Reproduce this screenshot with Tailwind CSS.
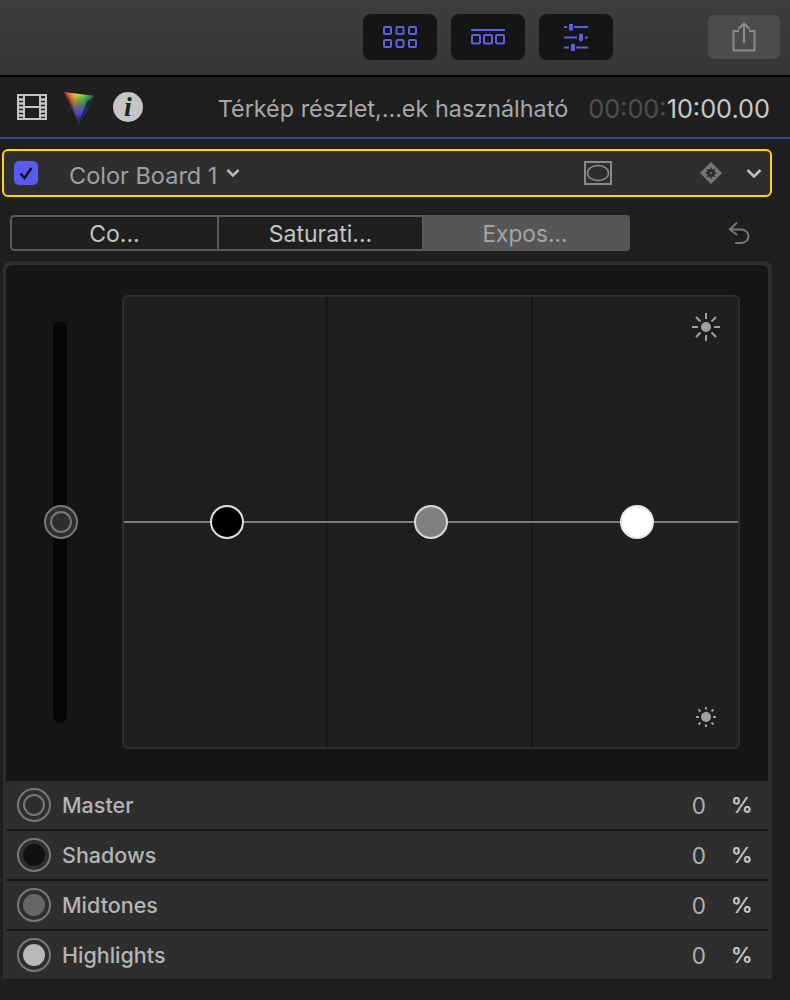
<!DOCTYPE html>
<html><head><meta charset="utf-8"><script src="https://cdn.jsdelivr.net/npm/@tailwindcss/browser@4"></script></head>
<body class="m-0 bg-[#1f1f1f]">
<div class="w-[790px] h-[1000px] overflow-hidden bg-[#1f1f1f] flex flex-col font-['Inter',sans-serif]">
  <!-- top toolbar -->
  <div class="h-[75px] shrink-0 bg-gradient-to-b from-[#3d3d3d] to-[#363636] flex items-start pt-[14px] pl-[363px]">
    <div class="w-[74px] h-[46px] rounded-[8px] bg-[#151515] flex items-center justify-center">
      <svg width="34" height="22" viewBox="0 0 34 22" fill="none" stroke="#5f5fe6" stroke-width="2"><rect x="1" y="1" width="7" height="7" rx="1"/><rect x="13.500" y="1" width="7" height="7" rx="1"/><rect x="26" y="1" width="7" height="7" rx="1"/><rect x="1" y="14" width="7" height="7" rx="1"/><rect x="13.500" y="14" width="7" height="7" rx="1"/><rect x="26" y="14" width="7" height="7" rx="1"/></svg>
    </div>
    <div class="w-[74px] h-[46px] rounded-[8px] bg-[#151515] flex items-center justify-center ml-[14px]">
      <svg width="34" height="16" viewBox="0 0 34 16" fill="none" stroke="#5f5fe6" stroke-width="2"><path d="M0 1H34"/><rect x="1" y="6" width="8" height="8.500" rx="1"/><rect x="13" y="6" width="8" height="8.500" rx="1"/><rect x="25" y="6" width="8" height="8.500" rx="1"/></svg>
    </div>
    <div class="w-[74px] h-[46px] rounded-[8px] bg-[#151515] flex items-center justify-center ml-[14px]">
      <svg width="24" height="27" viewBox="0 0 24 27" fill="#5f5fe6" stroke="none"><path d="M0 2h3v2H0zM10 2h14v2H10zM0 12.500h13v2H0zM21 12.500h3v2h-3zM0 22.500h5v2H0zM12 22.500h12v2H12z"/><rect x="5" y="-1" width="4" height="8" rx="2"/><rect x="15" y="9.500" width="4" height="8" rx="2"/><rect x="7" y="19.500" width="4" height="8" rx="2"/></svg>
    </div>
    <div class="w-[72px] h-[44px] rounded-[6px] bg-[#4c4c4c] flex items-center justify-center ml-[95px] mt-px">
      <svg width="24" height="30" viewBox="0 0 24 30" fill="none" stroke="#8c8c8c" stroke-width="2"><path d="M7 9H1.500V28.500H22.500V9H17"/><path d="M12 21V2M6.500 7L12 1.500L17.500 7"/></svg>
    </div>
  </div>
  <div class="h-[2px] shrink-0 bg-black"></div>
  <!-- info bar -->
  <div class="h-[60px] shrink-0 flex items-center pl-[17px] pr-[20px]">
    <svg width="30" height="28" viewBox="0 0 30 28" fill="none" stroke="#c4c4c4" stroke-width="2"><rect x="1" y="2" width="28" height="24"/><path d="M7 2V26M23 2V26M7 14H23"/><path d="M1 6.500H7M1 10.500H7M1 14.500H7M1 18.500H7M1 22.500H7M23 6.500H29M23 10.500H29M23 14.500H29M23 18.500H29M23 22.500H29" stroke-width="2.500"/></svg>
    <svg width="34" height="32" viewBox="0 0 34 32" class="ml-[16px]">
      <defs><linearGradient id="g" x1="0" y1="0" x2="1" y2="0"><stop offset="0" stop-color="#e02040"/><stop offset="0.35" stop-color="#f0c030"/><stop offset="0.6" stop-color="#60e050"/><stop offset="0.85" stop-color="#308060"/><stop offset="1" stop-color="#301a30"/></linearGradient><linearGradient id="h" x1="0" y1="0" x2="0" y2="1"><stop offset="0.1" stop-color="#000" stop-opacity="0"/><stop offset="0.65" stop-color="#4a3ae0" stop-opacity="0.9"/><stop offset="1" stop-color="#1a1a40"/></linearGradient></defs>
      <path d="M1 1L33 5L16 32Z" fill="url(#g)"/><path d="M1 1L33 5L16 32Z" fill="url(#h)"/><path d="M33 5L16 32L24 10Z" fill="#000" fill-opacity="0.5"/><path d="M1 1L16 32L6 6Z" fill="#000" fill-opacity="0.35"/>
    </svg>
    <div class="ml-[16px] w-[30px] h-[30px] rounded-full bg-[#c6c6c6] flex items-center justify-center font-['Liberation_Serif',serif] italic font-bold text-[28px] leading-none text-[#1f1f1f]">i</div>
    <div class="ml-auto pt-[3px] text-[23.400px] leading-none text-[#a8a8a8] whitespace-nowrap">Térkép részlet,...ek használható</div>
    <div class="ml-[20px] pt-[3px] text-[25.300px] leading-none whitespace-nowrap text-[#c8c8c8]"><span class="text-[#4f4f4f]">00:00:</span>10:00.00</div>
  </div>
  <div class="h-[2px] shrink-0 bg-[#40409c]"></div>
  <!-- color board header -->
  <div class="mt-[10px] ml-[2px] w-[770px] h-[48px] shrink-0 border-2 border-[#ffd60a] rounded-[6px] bg-[#2e2e2e] flex items-center pl-[10px] pr-[8px]">
    <div class="w-6 h-6 rounded-[5px] bg-[#5a5af0] flex items-center justify-center">
      <svg width="16" height="16" viewBox="0 0 16 16" fill="none" stroke="#111" stroke-width="2.500"><path d="M2.500 8.500L6.500 13L13.500 3"/></svg>
    </div>
    <span class="ml-[31px] pt-[5px] text-[23.500px] leading-none text-[#a0a0a0] whitespace-nowrap">Color Board 1</span>
    <svg width="14" height="10" viewBox="0 0 14 10" fill="none" stroke="#b8b8b8" stroke-width="2.500" class="ml-[9px]"><path d="M1.500 2L7 7.500L12.500 2"/></svg>
    <svg width="28" height="24" viewBox="0 0 28 24" fill="none" stroke="#8a8a8a" class="ml-auto"><rect x="1" y="1" width="26" height="22" stroke-width="2"/><ellipse cx="14" cy="12" rx="10.500" ry="7.500" stroke-width="1.500"/></svg>
    <svg width="22" height="22" viewBox="0 0 22 22" class="ml-[88px]"><path d="M11 0L22 11L11 22L0 11Z" fill="#777"/><circle cx="11" cy="11" r="4" fill="#2e2e2e"/><path d="M11 5.500V16.500M5.500 11H16.500M7 7L15 15M15 7L7 15" stroke="#2e2e2e" stroke-width="1.500"/><circle cx="11" cy="11" r="1.200" fill="#666"/></svg>
    <svg width="16" height="11" viewBox="0 0 16 11" fill="none" stroke="#c0c0c0" stroke-width="2.500" class="ml-[24px]"><path d="M1.500 2L8 8.500L14.500 2"/></svg>
  </div>
  <!-- tabs -->
  <div class="mt-[18px] h-[36px] shrink-0 flex items-center pl-[10px]">
    <div class="w-[620px] h-[36px] flex rounded-[4px] overflow-hidden text-[23px] leading-none">
      <div class="w-[209px] border-2 border-[#5a5a5a] rounded-l-[4px] flex items-center justify-center text-[#c4c4c4] pt-[2px]">Co...</div>
      <div class="w-[205px] border-y-2 border-r-2 border-[#5a5a5a] flex items-center justify-center text-[#c4c4c4] pt-[2px]">Saturati...</div>
      <div class="flex-1 bg-[#565656] flex items-center justify-center text-[#a4a4a4] pt-[2px] pr-[4px] text-[22.700px]">Expos...</div>
    </div>
    <svg width="22" height="24" viewBox="0 0 22 24" fill="none" stroke="#787878" stroke-width="2" class="ml-[98px]"><path d="M9 1.500L2 8.500L9 14"/><path d="M2 8.500H13C23 8.500 23 22 13 22H7"/></svg>
  </div>
  <!-- panel -->
  <div class="mt-[10px] ml-[3px] w-[769px] h-[718px] shrink-0 rounded-t-[8px] bg-[#2e2e2e] pt-[4px] pl-[3px] pr-[4px] flex flex-col">
    <div class="h-[516px] shrink-0 bg-[#161616] rounded-t-[6px] flex pt-[30px]">
      <div class="w-[116px] shrink-0 pl-[47px]">
        <div class="w-[14px] h-[402px] mt-[26px] rounded-full bg-[#070707] relative flex items-center">
          <div class="absolute left-[-9px] w-[34px] h-[34px] rounded-full bg-[#2e2e2e] border-2 border-[#787878] flex items-center justify-center">
            <div class="w-[22px] h-[22px] rounded-full border-2 border-[#787878]"></div>
          </div>
        </div>
      </div>
      <div class="w-[618px] h-[454px] rounded-[6px] border-2 border-[#2e2e2e] bg-[#1f1f1f] grid grid-cols-[204px_205px_1fr] relative overflow-hidden">
        <div class="border-r-2 border-[#161616]"></div>
        <div class="border-r-2 border-[#161616]"></div>
        <div></div>
        <div class="absolute left-0 right-0 top-[224px] h-[2px] bg-[#7c7c7c]"></div>
        <div class="absolute left-[86px] top-[208px] w-[34px] h-[34px] rounded-full bg-black border-2 border-[#e0e0e0]"></div>
        <div class="absolute left-[290px] top-[208px] w-[34px] h-[34px] rounded-full bg-[#808080] border-2 border-[#d8d8d8]"></div>
        <div class="absolute left-[496px] top-[208px] w-[34px] h-[34px] rounded-full bg-white border-2 border-[#e8e8e8]"></div>
        <svg width="28" height="28" viewBox="0 0 28 28" stroke="#a0a0a0" stroke-width="2" class="absolute right-[18px] top-[16px]"><circle cx="14" cy="14" r="5" fill="#a0a0a0" stroke="none"/><path d="M14 0V6M14 22V28M0 14H6M22 14H28M4 4L8.500 8.500M19.500 19.500L24 24M24 4L19.500 8.500M8.500 19.500L4 24"/></svg>
        <svg width="20" height="20" viewBox="0 0 20 20" stroke="#a0a0a0" stroke-width="2" class="absolute right-[22px] bottom-[20px]"><circle cx="10" cy="10" r="5" fill="#a0a0a0" stroke="none"/><path d="M10 0V2.500M10 17.500V20M0 10H3M17 10H20M2.500 2.500L4.500 4.500M15.500 15.500L17.500 17.500M17.500 2.500L15.500 4.500M4.500 15.500L2.500 17.500"/></svg>
      </div>
    </div>
    <!-- rows -->
    <div class="flex flex-col text-[21.500px] leading-none">
      <div class="h-[48px] flex items-center pl-[11px] pr-[15px] border-b-2 border-[#1a1a1a] box-content">
        <div class="w-[34px] h-[34px] rounded-full border-2 border-[#787878] flex items-center justify-center"><div class="w-[22px] h-[22px] rounded-full border-2 border-[#787878]"></div></div>
        <span class="ml-[11px] pt-[2px] font-medium text-[#b4b4b4]">Master</span><span class="ml-auto pt-[2px] text-[#b0b0b0] text-[22.500px]">0</span><span class="ml-[25px] pt-[2px] w-[22px] text-[#c8c8c8] font-semibold text-[21.500px]">%</span>
      </div>
      <div class="h-[48px] flex items-center pl-[11px] pr-[15px] border-b-2 border-[#1a1a1a] box-content">
        <div class="w-[34px] h-[34px] rounded-full border-2 border-[#787878] flex items-center justify-center"><div class="w-[22px] h-[22px] rounded-full bg-[#111]"></div></div>
        <span class="ml-[11px] pt-[2px] font-medium text-[#b4b4b4]">Shadows</span><span class="ml-auto pt-[2px] text-[#b0b0b0] text-[22.500px]">0</span><span class="ml-[25px] pt-[2px] w-[22px] text-[#c8c8c8] font-semibold text-[21.500px]">%</span>
      </div>
      <div class="h-[48px] flex items-center pl-[11px] pr-[15px] border-b-2 border-[#1a1a1a] box-content">
        <div class="w-[34px] h-[34px] rounded-full border-2 border-[#787878] flex items-center justify-center"><div class="w-[22px] h-[22px] rounded-full bg-[#666]"></div></div>
        <span class="ml-[11px] pt-[2px] font-medium text-[#b4b4b4]">Midtones</span><span class="ml-auto pt-[2px] text-[#b0b0b0] text-[22.500px]">0</span><span class="ml-[25px] pt-[2px] w-[22px] text-[#c8c8c8] font-semibold text-[21.500px]">%</span>
      </div>
      <div class="h-[48px] flex items-center pl-[11px] pr-[15px]">
        <div class="w-[34px] h-[34px] rounded-full border-2 border-[#787878] flex items-center justify-center"><div class="w-[22px] h-[22px] rounded-full bg-[#b8b8b8]"></div></div>
        <span class="ml-[11px] pt-[2px] font-medium text-[#b4b4b4]">Highlights</span><span class="ml-auto pt-[2px] text-[#b0b0b0] text-[22.500px]">0</span><span class="ml-[25px] pt-[2px] w-[22px] text-[#c8c8c8] font-semibold text-[21.500px]">%</span>
      </div>
    </div>
  </div>
</div>
</body></html>
